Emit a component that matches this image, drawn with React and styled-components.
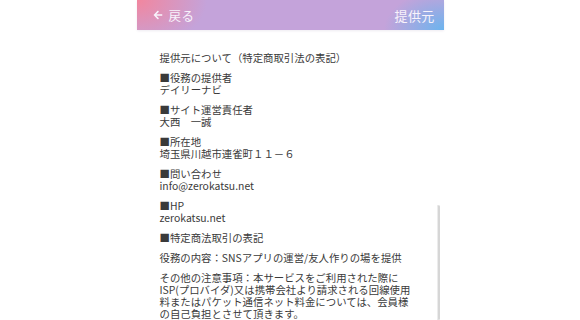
import React from "react";
import styled, { createGlobalStyle } from "styled-components";
import { FaArrowLeft } from "react-icons/fa";

const GlobalStyle = createGlobalStyle`
  html, body {
    margin: 0;
    padding: 0;
    background: #ffffff;
    overflow: hidden;
  }
  body {
    font-family: "Noto Sans CJK JP", "Noto Sans", sans-serif;
  }
`;

const Page = styled.div`
  position: relative;
  width: 307px;
  margin: 0 auto;
  min-height: 320px;
  background: #fff;
`;

const Header = styled.header`
  height: 30px;
  display: flex;
  align-items: center;
  justify-content: space-between;
  padding: 0 9px 0 16px;
  background:
    radial-gradient(ellipse 70px 48px at 0 0, #f2869e 0%, rgba(242, 134, 158, 0) 100%),
    radial-gradient(ellipse 60px 40px at 100% 100%, #6cb4ee 0%, rgba(108, 180, 238, 0) 100%),
    #c4a3da;
  color: #f8f3fb;
  font-size: 13px;
  box-shadow: 0 1px 2px rgba(120, 100, 150, 0.12);
`;

const Back = styled.a`
  display: flex;
  align-items: center;
  gap: 6px;
  color: inherit;
  text-decoration: none;
  font-size: 12.5px;
  letter-spacing: 0.5px;
  svg {
    width: 10px;
    height: 10px;
  }
`;

const Title = styled.span`
  font-size: 13px;
  letter-spacing: 0.3px;
`;

const Content = styled.main`
  padding: 22px 14px 0 23px;
  color: #3a3a3a;
  font-size: 10.4px;
  line-height: 12px;
  display: flex;
  flex-direction: column;
  gap: 8px;
`;

const Block = styled.p`
  margin: 0;
  white-space: pre-line;
`;

const Scrollbar = styled.div`
  position: absolute;
  right: 4px;
  top: 205px;
  bottom: 0;
  width: 3px;
  border-radius: 2px;
  background: #d6d6d6;
  box-shadow: inset 1px 0 0 #ececec;
`;

const blocks = [
  "提供元について（特定商取引法の表記）",
  "■役務の提供者\nデイリーナビ",
  "■サイト運営責任者\n大西　一誠",
  "■所在地\n埼玉県川越市連雀町１１－６",
  "■問い合わせ\ninfo@zerokatsu.net",
  "■HP\nzerokatsu.net",
  "■特定商法取引の表記",
  "役務の内容：SNSアプリの運営/友人作りの場を提供",
  "その他の注意事項：本サービスをご利用された際に\nISP(プロバイダ)又は携帯会社より請求される回線使用\n料またはパケット通信ネット料金については、会員様\nの自己負担とさせて頂きます。",
];

export default function App() {
  return (
    <>
      <GlobalStyle />
      <Page>
        <Header>
          <Back href="#">
            <FaArrowLeft />
            戻る
          </Back>
          <Title>提供元</Title>
        </Header>
        <Content>
          {blocks.map((text, i) => (
            <Block key={i}>{text}</Block>
          ))}
        </Content>
        <Scrollbar />
      </Page>
    </>
  );
}
